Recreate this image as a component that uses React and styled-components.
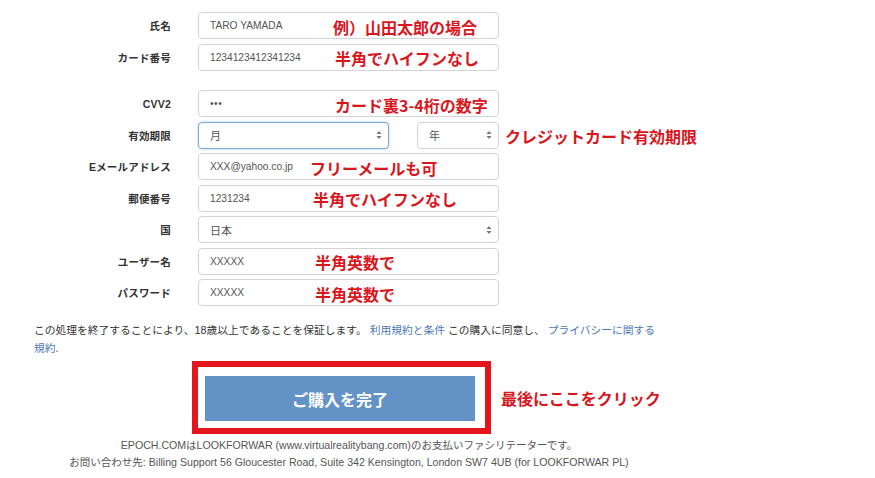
import React from "react";
import styled, { createGlobalStyle, css } from "styled-components";

const Global = createGlobalStyle`
  html, body { margin: 0; padding: 0; background: #fff; }
  body { font-family: "Liberation Sans", "Noto Sans CJK JP", sans-serif; color: #333; }
`;

const Page = styled.div`
  width: 875px;
  height: 478px;
  overflow: hidden;
  background: #fff;
`;

const Form = styled.div`
  display: flex;
  flex-direction: column;
  gap: 4.5px;
  padding-top: 12px;
`;

const Row = styled.div`
  display: flex;
  align-items: center;
  height: 27px;
  margin-top: ${(p) => (p.$spaced ? "15px" : "0")};
`;

const Label = styled.div`
  width: 171px;
  flex: none;
  text-align: right;
  font-family: "Liberation Sans", "Noto Sans CJK JP", sans-serif;
  font-size: 10.5px;
  font-weight: 700;
  color: #333;
  letter-spacing: 0.2px;
`;

const Field = styled.div`
  position: relative;
  box-sizing: border-box;
  margin-left: ${(p) => p.$ml ?? 27}px;
  width: ${(p) => p.$w ?? 301}px;
  height: 27px;
  flex: none;
  display: flex;
  align-items: center;
  padding: 0 6px 0 11px;
  border: 1px solid ${(p) => (p.$focus ? "#7faad8" : "#d3d3d3")};
  border-radius: 4px;
  background: #fff;
  ${(p) =>
    p.$focus &&
    css`
      box-shadow: 0 0 3px rgba(102, 160, 220, 0.55);
    `}
  font-size: 10px;
  color: #555;
`;

const Value = styled.span`
  flex: 1;
  font-size: ${(p) => (p.$jp ? "11px" : "10.2px")};
  letter-spacing: ${(p) => (p.$dots ? "0.5px" : "0")};
`;

const Note = styled.span`
  position: absolute;
  left: ${(p) => p.$left}px;
  top: 50%;
  transform: translateY(-50%);
  white-space: nowrap;
  font-family: "Noto Sans CJK JP", sans-serif;
  font-size: 16px;
  font-weight: 700;
  color: #d8161e;
  line-height: 1;
  margin-top: 1px;
`;

const SideNote = styled.span`
  margin-left: 6px;
  white-space: nowrap;
  font-family: "Noto Sans CJK JP", sans-serif;
  font-size: 16px;
  font-weight: 700;
  color: #d8161e;
  line-height: 1;
  margin-top: 1px;
`;

const Arrows = () => (
  <svg width="6" height="10" viewBox="0 0 6 10" style={{ flex: "none" }}>
    <path d="M3 1 L5.5 4 L0.5 4 Z" fill="#777" />
    <path d="M3 9 L5.5 6 L0.5 6 Z" fill="#777" />
  </svg>
);

const Terms = styled.p`
  margin: 15px 0 0 0;
  padding-left: 34px;
  width: 660px;
  font-family: "Liberation Sans", "Noto Sans CJK JP", sans-serif;
  font-size: 10.75px;
  line-height: 18px;
  color: #333;
`;

const Link = styled.a`
  color: #4a78b5;
  text-decoration: none;
`;

const CtaRow = styled.div`
  display: flex;
  align-items: center;
  margin-top: 4px;
  padding-left: 192px;
`;

const Highlight = styled.div`
  box-sizing: border-box;
  width: 299px;
  height: 73px;
  border: 6px solid #e3161e;
  padding: 3px 10px 1px 7px;
  display: flex;
  align-items: center;
`;

const Submit = styled.button`
  width: 270px;
  height: 45px;
  border: none;
  border-radius: 0;
  background: #6393c6;
  color: #fff;
  font-family: "Noto Sans CJK JP", sans-serif;
  font-size: 16px;
  font-weight: 700;
  cursor: pointer;
  padding: 0;
`;

const Callout = styled.span`
  margin-left: 10px;
  font-family: "Noto Sans CJK JP", sans-serif;
  font-size: 16px;
  font-weight: 700;
  color: #d8161e;
`;

const Footer = styled.div`
  width: 698px;
  margin-top: 3px;
  text-align: center;
  font-family: "Liberation Sans", "Noto Sans CJK JP", sans-serif;
  font-size: 10.6px;
  line-height: 17px;
  color: #555;
`;

const FooterLine = styled.div`
  white-space: nowrap;
`;

const Jp = styled.span`
  font-size: 10.5px;
`;

export default function App() {
  return (
    <Page>
      <Global />
      <Form>
        <Row>
          <Label>氏名</Label>
          <Field>
            <Value>TARO YAMADA</Value>
            <Note $left={134}>例）山田太郎の場合</Note>
          </Field>
        </Row>
        <Row>
          <Label>カード番号</Label>
          <Field>
            <Value>1234123412341234</Value>
            <Note $left={136}>半角でハイフンなし</Note>
          </Field>
        </Row>
        <Row $spaced>
          <Label>CVV2</Label>
          <Field>
            <Value $dots>•••</Value>
            <Note $left={136}>カード裏3-4桁の数字</Note>
          </Field>
        </Row>
        <Row>
          <Label>有効期限</Label>
          <Field $w={191} $focus>
            <Value $jp>月</Value>
            <Arrows />
          </Field>
          <Field $w={82} $ml={28}>
            <Value $jp>年</Value>
            <Arrows />
          </Field>
          <SideNote>クレジットカード有効期限</SideNote>
        </Row>
        <Row>
          <Label>Eメールアドレス</Label>
          <Field>
            <Value>XXX@yahoo.co.jp</Value>
            <Note $left={111}>フリーメールも可</Note>
          </Field>
        </Row>
        <Row>
          <Label>郵便番号</Label>
          <Field>
            <Value>1231234</Value>
            <Note $left={114}>半角でハイフンなし</Note>
          </Field>
        </Row>
        <Row>
          <Label>国</Label>
          <Field>
            <Value $jp>日本</Value>
            <Arrows />
          </Field>
        </Row>
        <Row>
          <Label>ユーザー名</Label>
          <Field>
            <Value>XXXXX</Value>
            <Note $left={116}>半角英数で</Note>
          </Field>
        </Row>
        <Row>
          <Label>パスワード</Label>
          <Field>
            <Value>XXXXX</Value>
            <Note $left={116}>半角英数で</Note>
          </Field>
        </Row>
      </Form>
      <Terms>
        この処理を終了することにより、18歳以上であることを保証します。{" "}
        <Link href="#">利用規約と条件</Link> この購入に同意し、{" "}
        <Link href="#">
          プライバシーに関する
          <br />
          規約
        </Link>
        .
      </Terms>
      <CtaRow>
        <Highlight>
          <Submit type="button">ご購入を完了</Submit>
        </Highlight>
        <Callout>最後にここをクリック</Callout>
      </CtaRow>
      <Footer>
        <FooterLine>
          EPOCH.COM<Jp>は</Jp>LOOKFORWAR (www.virtualrealitybang.com)
          <Jp>のお支払いファシリテーターです。</Jp>
        </FooterLine>
        <FooterLine>
          <Jp>お問い合わせ先</Jp>: Billing Support 56 Gloucester Road, Suite 342 Kensington, London SW7 4UB (for LOOKFORWAR PL)
        </FooterLine>
      </Footer>
    </Page>
  );
}
